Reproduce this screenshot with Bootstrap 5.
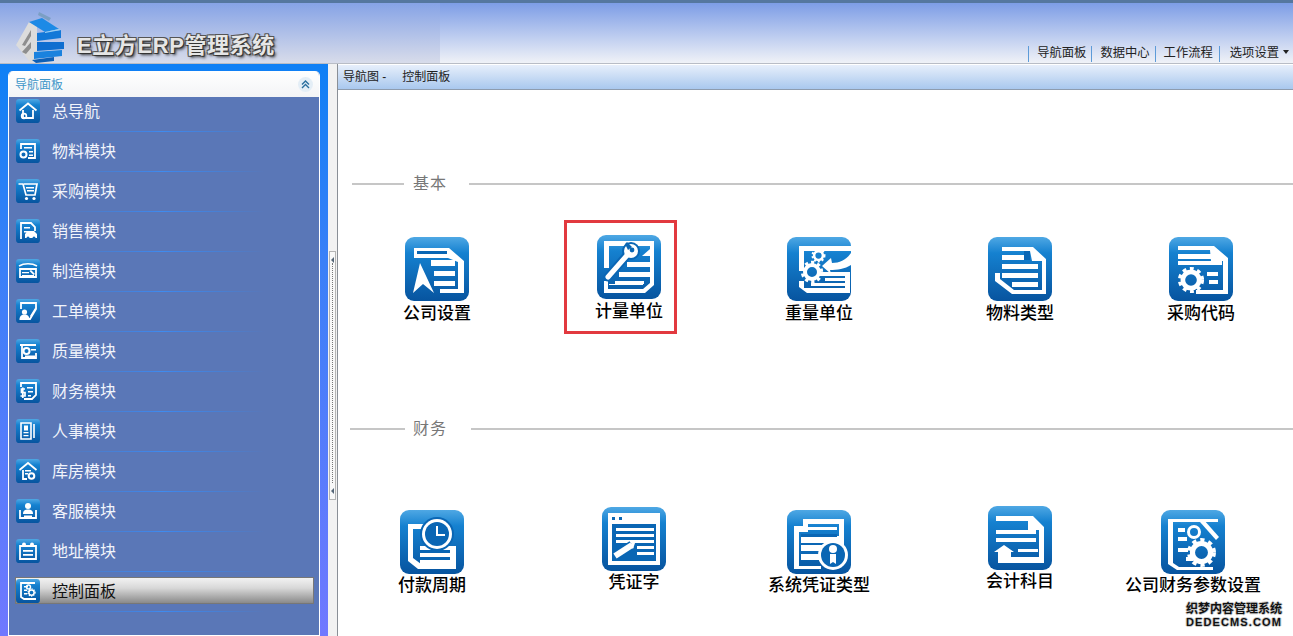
<!DOCTYPE html>
<html lang="zh-CN">
<head>
  <meta charset="UTF-8">
  <meta name="viewport" content="width=device-width, initial-scale=1.0">
  <title>E立方ERP管理系统</title>
  <link href="https://cdn.jsdelivr.net/npm/bootstrap@5.3.0/dist/css/bootstrap.min.css" rel="stylesheet">
  <style>
    html, body { height: 100%; overflow: hidden; }
    body {
      font-family: "Liberation Sans", "Noto Sans CJK SC", sans-serif;
      background: #fff;
      color: #000;
    }
    /* header */
    .top-bar {
      height: 64px;
      border-top: 3px solid #55779f;
      border-bottom: 1px solid #b9bdc6;
      background: linear-gradient(#7d9de6, #f0f2f7);
    }
    .top-left {
      width: 440px;
      background: linear-gradient(#86a3e6, #d8dcea);
    }
    .logo-mark { width: 54px; height: 54px; margin: 6px 0 0 14px; flex: none; }
    .logo-name {
      margin: 29px 0 0 9px;
      font-size: 22px;
      line-height: 28px;
      font-weight: 700;
      letter-spacing: .6px;
      color: #e6e6e6;
      white-space: nowrap;
      text-shadow: 1px 1px 0 #333, -1px -1px 0 #555, 1px -1px 0 #555, -1px 1px 0 #555, 2px 2px 3px #333;
    }
    .top-links { margin-bottom: 1px; }
    .top-links .nav-link {
      padding: 0 0 0 8px;
      height: 16px;
      line-height: 15px;
      font-size: 12.3px;
      color: #222;
      border-left: 1px solid #5d9bd8;
    }
    .top-links .nav-item + .nav-item { margin-left: 5px; }
    .top-links .nav-item:last-child { margin-left: 6px; margin-right: 4px; }
    .top-links .nav-item:last-child .nav-link { padding-left: 10px; }
    .top-links .dropdown-toggle::after { margin-left: 4px; border-top-width: 4px; border-left-width: 3px; border-right-width: 3px; }
    /* left side */
    .page-body { height: 572px; }
    .side-wrap {
      width: 328px;
      flex: none;
      padding: 7px 8px 0;
      background: linear-gradient(#0f80f5, #3a80f8 35%, #7078ff);
    }
    .side-panel {
      width: 312px;
      height: 100%;
      border: 1px solid #fff;
      border-top: 0;
      border-radius: 5px 5px 0 0;
      background: #5a77b7;
      overflow: hidden;
    }
    .side-head {
      height: 26px;
      padding: 1px 6px 0 6px;
      font-size: 12px;
      color: #3f97c9;
      background: linear-gradient(#fff, #f3f4f6);
    }
    .side-fold {
      width: 15px;
      height: 15px;
      border-radius: 50%;
      background: #e4eef6;
    }
    .side-menu { margin: -5px 0 0; padding: 0; list-style: none; }
    .side-item { height: 40px; padding-top: 5px; position: relative; }
    .side-item::after {
      content: "";
      position: absolute;
      left: 51px;
      bottom: 0;
      width: 205px;
      height: 1px;
      background: linear-gradient(90deg, #5a77b7, #4a7ed0 20%, #3f86ea 45%, #3f8cf0 50%, #3f86ea 55%, #4a7ed0 80%, #5a77b7);
    }
    .side-link {
      height: 27px;
      margin: 0 5px 0 6px;
      padding-left: 0;
      gap: 12px;
      font-size: 16px;
      color: #f1f4fb;
      text-decoration: none;
      border: 1px solid transparent;
    }
    .side-link > svg { width: 24px; height: 24px; flex: none; }
    .side-link span { padding-top: 2px; }
    .side-link.is-on {
      color: #111;
      border-color: #777;
      background: linear-gradient(#f2f2f2, #d8d8d8 40%, #8a8a8a);
    }
    /* splitter */
    .split-bar { width: 9px; flex: none; background: #f2f2f2; padding: 187px 0 0 1px; }
    .split-grip {
      width: 7px;
      height: 249px;
      border: 1px solid #b4b4b4;
      background: #f8f8f8;
    }
    .split-dots { border-left: 1px dotted #777; margin-left: 2px; height: 220px; }
    .split-arrow { width: 0; height: 0; margin: 5px 0 0 1px; border: 3px solid transparent; border-right-color: #567; border-left: 0; }
    /* content */
    .main-area { border-left: 1px solid #8a8f96; min-width: 0; }
    .crumb-bar {
      height: 25px;
      margin-top: 1px;
      padding: 0 0 1px 5px;
      font-size: 12px;
      color: #222;
      border-bottom: 1px solid #8e9cae;
      background: linear-gradient(#e7effb, #a9c8ee);
    }
    .crumb-bar span:first-child { margin-right: 16px; }
    .group-head { height: 24px; color: #777; font-size: 16px; letter-spacing: 1px; }
    .group-head i { display: block; height: 2px; background: #c6c6c6; }
    .head-one { margin-top: 82px; }
    .head-one i:first-child { width: 52px; margin: 0 9px 0 14px; }
    .head-one i:last-child { flex: 1; margin-left: 22px; }
    .head-two { margin-top: 91px; }
    .head-two i:first-child { width: 55px; margin: 0 8px 0 12px; }
    .head-two i:last-child { flex: 1; margin-left: 24px; }
    .tile-row { align-items: flex-start; }
    .row-one { margin-top: 39px; }
    .row-two { margin-top: 65px; }
    .tile {
      width: 150px;
      flex: none;
      text-align: center;
      font-size: 17px;
      line-height: 24px;
      font-weight: 500;
      position: relative;
    }
    .tile > svg { display: block; width: 64px; height: 64px; margin: 0 auto; }
    .tile-text { display: block; margin-top: 1px; white-space: nowrap; }
    .row-two .tile-text { margin-top: 0; }
    .row-one .tile { margin-top: 2px; }
    .row-one .tile:nth-child(1) { margin-left: 24px; }
    .row-one .tile:nth-child(2) { margin-left: 42px; margin-top: 0; }
    .row-one .tile:nth-child(3) { margin-left: 40px; }
    .row-one .tile:nth-child(4) { margin-left: 51px; }
    .row-one .tile:nth-child(5) { margin-left: 31px; }
    .row-two .tile:nth-child(1) { margin-left: 19px; margin-top: 4px; }
    .row-two .tile:nth-child(2) { margin-left: 52px; margin-top: 1px; }
    .row-two .tile:nth-child(3) { margin-left: 35px; margin-top: 4px; }
    .row-two .tile:nth-child(4) { margin-left: 51px; }
    .row-two .tile:nth-child(5) { margin-left: 23px; margin-top: 4px; }
    .tile-mark::after {
      content: "";
      position: absolute;
      left: 10px;
      top: -15px;
      width: 113px;
      height: 114px;
      border: 3px solid #e2393f;
    }
    .site-mark {
      position: absolute;
      right: 11px;
      bottom: 7px;
      font-size: 12px;
      line-height: 13px;
      font-weight: 700;
      text-align: center;
      color: #111;
      text-shadow: 1px 0 0 #ccc, -1px 0 0 #ccc, 0 1px 0 #ccc, 0 -1px 0 #ccc;
    }
    .site-mark span { display: block; letter-spacing: 1.1px; font-size: 11px; }
    .ico-w { fill: #fff; }
    .ico-b { fill: #0a66b4; }
    .ico-s { fill: none; stroke: #fff; }
  </style>
</head>
<body>
  <!-- shared icon background -->
  <svg width="0" height="0" class="position-absolute">
    <defs>
      <linearGradient id="tileBg" x1="0" y1="0" x2="0" y2="1">
        <stop offset="0" stop-color="#4fa8e4"/>
        <stop offset=".25" stop-color="#1581d0"/>
        <stop offset="1" stop-color="#07549f"/>
      </linearGradient>
      <symbol id="bg" viewBox="0 0 64 64"><rect width="64" height="64" rx="9" fill="url(#tileBg)"/></symbol>
      <symbol id="gear" viewBox="0 0 24 24">
        <circle cx="12" cy="12" r="7" fill="none" stroke="#fff" stroke-width="4"/>
        <circle cx="12" cy="12" r="9.500" fill="none" stroke="#fff" stroke-width="3.400" stroke-dasharray="3.200 3.020"/>
      </symbol>
    </defs>
  </svg>

  <header class="top-bar d-flex justify-content-between">
    <div class="top-left d-flex">
      <svg class="logo-mark" viewBox="0 0 54 54">
        <path d="M25 3l12 6-2 3-11-6z" fill="#7b9fc4"/>
        <path d="M2 36L15 13l8 4v33l-6 4z" fill="#dcdcdc"/>
        <path d="M8 36l9-15v6l-6 10zM8 43l9-10v6l-5 6z" fill="#8e8e8e"/>
        <path d="M15 13l13-4 17 11-14 3z" fill="#1d8ae6"/>
        <path d="M23 24l24-3v8l-24 3z" fill="#1278d8"/>
        <path d="M31 23l14-3 2 1-16 3z" fill="#9ad0f4"/>
        <path d="M23 33l27 0v7l-27 2z" fill="#0f6ed0"/>
        <path d="M20 43l28-2v6l-28 3z" fill="#1a82de"/>
        <path d="M18 51l22-3v4l-18 2z" fill="#0d5fb6"/>
      </svg>
      <div class="logo-name">E立方ERP管理系统</div>
    </div>
    <ul class="nav top-links align-items-end">
      <li class="nav-item"><a class="nav-link" href="#">导航面板</a></li>
      <li class="nav-item"><a class="nav-link" href="#">数据中心</a></li>
      <li class="nav-item"><a class="nav-link" href="#">工作流程</a></li>
      <li class="nav-item"><a class="nav-link dropdown-toggle" href="#">选项设置</a></li>
    </ul>
  </header>

  <div class="page-body d-flex">
    <aside class="side-wrap">
      <div class="side-panel">
        <div class="side-head d-flex align-items-center justify-content-between">
          <span>导航面板</span>
          <span class="side-fold d-flex align-items-center justify-content-center">
            <svg width="9" height="9" viewBox="0 0 9 9" fill="none" stroke="#2a6f9e" stroke-width="1.4"><path d="M1 4.5L4.5 1 8 4.5M1 8L4.5 4.5 8 8"/></svg>
          </span>
        </div>
        <ul class="side-menu">
          <li class="side-item"><a class="side-link d-flex align-items-center" href="#">
            <svg viewBox="0 0 24 24"><use href="#bg"/><path class="ico-s" stroke-width="1.8" d="M3.5 11.5L12 4.5l8.500 7M7 11v8h10v-8"/><circle class="ico-s" stroke-width="1.600" cx="8" cy="17" r="2.400"/></svg>
            <span>总导航</span></a></li>
          <li class="side-item"><a class="side-link d-flex align-items-center" href="#">
            <svg viewBox="0 0 24 24"><use href="#bg"/><path class="ico-s" stroke-width="1.8" d="M5 10V5h14v14h-7"/><path class="ico-w" d="M8 8h8v1.500H8zM13 12h4v1.500h-4zM13 15.500h4V17h-4z"/><circle class="ico-s" stroke-width="2" cx="7.500" cy="15.500" r="3"/></svg>
            <span>物料模块</span></a></li>
          <li class="side-item"><a class="side-link d-flex align-items-center" href="#">
            <svg viewBox="0 0 24 24"><use href="#bg"/><path class="ico-s" stroke-width="1.700" d="M2.500 5H7l3 11h9l2-11H8"/><path class="ico-w" d="M10 8h8v1.400h-8zM11 11h7v1.400h-7z"/><circle class="ico-w" cx="10.500" cy="19.500" r="1.600"/><circle class="ico-w" cx="18" cy="19.500" r="1.600"/></svg>
            <span>采购模块</span></a></li>
          <li class="side-item"><a class="side-link d-flex align-items-center" href="#">
            <svg viewBox="0 0 24 24"><use href="#bg"/><path class="ico-s" stroke-width="1.800" d="M5 20V4h10l4 4v4"/><path class="ico-w" d="M8 8h6v1.500H8zM8 12h5v1.500H8zM9 15l3-3h6l3 3v4H9z"/><circle class="ico-b" cx="12" cy="19" r="1.500"/><circle class="ico-b" cx="18" cy="19" r="1.500"/></svg>
            <span>销售模块</span></a></li>
          <li class="side-item"><a class="side-link d-flex align-items-center" href="#">
            <svg viewBox="0 0 24 24"><use href="#bg"/><path class="ico-s" stroke-width="1.500" d="M3 7c5-3 13-3 18 0"/><path class="ico-s" stroke-width="1.800" d="M4 10h16v8H4z"/><path class="ico-w" d="M6 13h7v1.300H6zM6 16h12v1.300H6zM15 11l4 4-1.500 1-4-4z"/></svg>
            <span>制造模块</span></a></li>
          <li class="side-item"><a class="side-link d-flex align-items-center" href="#">
            <svg viewBox="0 0 24 24"><use href="#bg"/><path class="ico-s" stroke-width="1.800" d="M5 10V4h15v6l-6 10h-2"/><circle class="ico-w" cx="8.500" cy="13" r="2.600"/><path class="ico-w" d="M3.500 21c0-4 2-5.500 5-5.500s5 1.500 5 5.500zM14 17l5-8 1 1-5 8z"/></svg>
            <span>工单模块</span></a></li>
          <li class="side-item"><a class="side-link d-flex align-items-center" href="#">
            <svg viewBox="0 0 24 24"><use href="#bg"/><path class="ico-s" stroke-width="1.800" d="M4 6h16M6 6v13h14v-5"/><circle class="ico-s" stroke-width="2" cx="10.500" cy="12" r="3"/><path class="ico-w" d="M15 10h5v1.500h-5zM9 16.500h10V18H9z"/></svg>
            <span>质量模块</span></a></li>
          <li class="side-item"><a class="side-link d-flex align-items-center" href="#">
            <svg viewBox="0 0 24 24"><use href="#bg"/><path class="ico-s" stroke-width="1.800" d="M5 8V4h15v12l-4 4H8"/><path class="ico-w" d="M11 8h6v1.500h-6zM12 12h5v1.500h-5zM12 16h3v1.500h-3z"/><path class="ico-s" stroke-width="1.700" d="M9 10H5.500v3.500H9V17H4.500M6.800 8.500V19"/></svg>
            <span>财务模块</span></a></li>
          <li class="side-item"><a class="side-link d-flex align-items-center" href="#">
            <svg viewBox="0 0 24 24"><use href="#bg"/><path class="ico-s" stroke-width="1.600" d="M5 4h10v16H5zM18 5v14"/><path class="ico-w" d="M8 6.500h4v5H8zM7.500 13h5v1.300h-5zM7.500 16h5v1.300h-5z"/></svg>
            <span>人事模块</span></a></li>
          <li class="side-item"><a class="side-link d-flex align-items-center" href="#">
            <svg viewBox="0 0 24 24"><use href="#bg"/><path class="ico-s" stroke-width="1.800" d="M3.500 11L12 4l8.500 7M7 11v9h4"/><path class="ico-w" d="M9 11h6v1.400H9zM9 14h3v1.400H9z"/><circle class="ico-s" stroke-width="2" cx="15.500" cy="17" r="2.800"/></svg>
            <span>库房模块</span></a></li>
          <li class="side-item"><a class="side-link d-flex align-items-center" href="#">
            <svg viewBox="0 0 24 24"><use href="#bg"/><circle class="ico-w" cx="12" cy="7" r="3"/><path class="ico-w" d="M7 15c0-3.500 2-4.500 5-4.500s5 1 5 4.500z"/><path class="ico-s" stroke-width="1.800" d="M4 11v8h16v-8"/><path class="ico-w" d="M8 16.500h8V18H8z"/></svg>
            <span>客服模块</span></a></li>
          <li class="side-item"><a class="side-link d-flex align-items-center" href="#">
            <svg viewBox="0 0 24 24"><use href="#bg"/><circle class="ico-w" cx="8" cy="5.500" r="2"/><circle class="ico-w" cx="16" cy="5.500" r="2"/><path class="ico-s" stroke-width="1.800" d="M4 10V7h16v3M4 10v10h16V10"/><path class="ico-w" d="M7 11h10v1.800H7zM7 15h10v1.800H7z"/></svg>
            <span>地址模块</span></a></li>
          <li class="side-item"><a class="side-link is-on d-flex align-items-center" href="#">
            <svg viewBox="0 0 24 24"><use href="#bg"/><path class="ico-s" stroke-width="1.800" d="M19 4H5v14l3 2h12"/><path class="ico-w" d="M8 7h4v1.400H8zM8 10.500h3v1.400H8zM8 14h3v1.400H8z"/><circle class="ico-s" stroke-width="1.400" cx="12.500" cy="8" r="2"/><svg x="11" y="9" width="9" height="9" viewBox="0 0 24 24"><use href="#gear"/></svg></svg>
            <span>控制面板</span></a></li>
        </ul>
      </div>
    </aside>

    <div class="split-bar">
      <div class="split-grip">
        <div class="split-arrow"></div>
        <div class="split-dots"></div>
        <div class="split-arrow"></div>
      </div>
    </div>

    <main class="main-area flex-grow-1 position-relative">
      <div class="crumb-bar d-flex align-items-center">
        <span>导航图 -</span><span>控制面板</span>
      </div>

      <div class="group-head head-one d-flex align-items-center"><i></i><span>基本</span><i></i></div>
      <div class="tile-row row-one d-flex">
        <a class="tile text-decoration-none text-black">
          <svg viewBox="0 0 64 64"><use href="#bg"/>
            <path class="ico-w" d="M9 11h35l15 13v32H35v-4h18V25l-10-4H9z"/>
            <path class="ico-b" d="M12 14h30v3H12z"/>
            <path class="ico-w" d="M26 23h24v6H26zM29 34h21v5H29zM29 44h21v5H29z"/>
            <path class="ico-w" d="M15 26l14 30-11-9-10 9z"/>
          </svg>
          <span class="tile-text">公司设置</span>
        </a>
        <a class="tile tile-mark text-decoration-none text-black">
          <svg viewBox="0 0 64 64"><use href="#bg"/>
            <path class="ico-w" d="M7 6h50v44l-9 8H7V46h4v8h35l7-6V11H12v22H7z"/>
            <path class="ico-w" d="M45 21l8-7v7zM30 27h23v5H30zM22 37h31v5H22zM18 46h29v3H18z"/>
            <path d="M11 42l21-24" stroke="#0a66b4" stroke-width="9" stroke-linecap="round"/>
            <circle class="ico-b" cx="34" cy="16" r="9"/>
            <path d="M11 42l21-24" stroke="#fff" stroke-width="5" stroke-linecap="round"/>
            <circle class="ico-w" cx="34" cy="16" r="7"/><circle class="ico-b" cx="35" cy="15" r="2.400"/>
            <path class="ico-b" d="M30 7l5 5-4 3-3-6z"/>
            <path class="ico-w" d="M12 49h34v1H12z"/>
          </svg>
          <span class="tile-text">计量单位</span>
        </a>
        <a class="tile text-decoration-none text-black">
          <svg viewBox="0 0 64 64"><use href="#bg"/>
            <path class="ico-w" d="M12 9h52v5H17v20h-5zM12 44h5v7h41V39H30v-4h33v21H20l-8-6z"/>
            <svg x="13" y="23" width="24" height="24" viewBox="0 0 24 24"><use href="#gear"/></svg>
            <svg x="24" y="11" width="15" height="15" viewBox="0 0 24 24"><use href="#gear"/></svg>
            <path class="ico-w" d="M64 16v12c-6 4-14 5-21 5l1 4-9-8 9-8 1 5c8 0 14-3 19-10z"/>
            <path class="ico-w" d="M38 41h20v3H38zM24 46h34v3H24z"/>
          </svg>
          <span class="tile-text">重量单位</span>
        </a>
        <a class="tile text-decoration-none text-black">
          <svg viewBox="0 0 64 64"><use href="#bg"/>
            <path class="ico-w" d="M14 10h31l13 12v35H24L7 44V36h5v6l14 11h28V24H44l-2-10H14z"/>
            <path class="ico-w" d="M14 18h22v5H14zM14 27h36v5H14zM14 36h36v5H14z"/>
            <path class="ico-w" d="M24 45h26v5H24z"/>
            <path class="ico-b" d="M36 14h6v9h-6zM19 41h4v4h-4z"/>
          </svg>
          <span class="tile-text">物料类型</span>
        </a>
        <a class="tile text-decoration-none text-black">
          <svg viewBox="0 0 64 64"><use href="#bg"/>
            <path class="ico-w" d="M9 9h36l14 12v36H27v-4h27V24H42l-1-11H9z"/>
            <path class="ico-w" d="M9 17h33v5H9zM9 24h44v4H9z"/>
            <svg x="8" y="29" width="28" height="28" viewBox="0 0 24 24"><use href="#gear"/></svg>
            <path class="ico-w" d="M38 35h11v4H38zM40 43h9v4H40z"/>
          </svg>
          <span class="tile-text">采购代码</span>
        </a>
      </div>

      <div class="group-head head-two d-flex align-items-center"><i></i><span>财务</span><i></i></div>
      <div class="tile-row row-two d-flex">
        <a class="tile text-decoration-none text-black">
          <svg viewBox="0 0 64 64"><use href="#bg"/>
            <path class="ico-w" d="M8 14h16v5H13v29l8 6h31V42h4v17H18L8 51z"/>
            <path class="ico-w" d="M20 36h36v6H20zM20 42h32v12H20z"/>
            <path class="ico-b" d="M20 40h30v3H20zM20 47h30v3H20z"/>
            <circle class="ico-b" cx="37" cy="24" r="17"/>
            <circle class="ico-w" cx="37" cy="24" r="15"/><circle class="ico-b" cx="37" cy="24" r="12"/>
            <path d="M37 16v9h8" fill="none" stroke="#fff" stroke-width="2"/>
          </svg>
          <span class="tile-text">付款周期</span>
        </a>
        <a class="tile text-decoration-none text-black">
          <svg viewBox="0 0 64 64"><use href="#bg"/>
            <path class="ico-w" d="M6 6h52v52H6z"/>
            <path class="ico-b" d="M10 17h44v37H10zM10 10h3v3h-3zM17 10h3v3h-3z"/>
            <path class="ico-w" d="M14 21h38v3H14zM14 27h38v3H14zM14 33h38v3H14zM35 39h17v3H35zM35 45h17v3H35z"/>
            <path d="M13 49l17-11" stroke="#0a66b4" stroke-width="9"/>
            <path d="M13 49l17-11" stroke="#fff" stroke-width="6"/>
            <path class="ico-w" d="M31 34l3-1-3 9-3-4z"/>
          </svg>
          <span class="tile-text">凭证字</span>
        </a>
        <a class="tile text-decoration-none text-black">
          <svg viewBox="0 0 64 64"><use href="#bg"/>
            <path class="ico-w" d="M7 16h9V9h41v27h-5V14H21v8H12v34h22v3H7z"/>
            <path class="ico-w" d="M21 17h29v3H21zM14 26h39v7H14zM14 35h28v6H14zM14 44h24v6H14z"/>
            <path class="ico-b" d="M14 24h36v3H14zM14 33h36v2H14z"/>
            <circle class="ico-w" cx="46" cy="45" r="15"/><circle class="ico-b" cx="46" cy="45" r="12"/>
            <circle class="ico-w" cx="46" cy="39" r="4"/><path class="ico-w" d="M43 44h6v10l-3-2-3 2z"/>
          </svg>
          <span class="tile-text">系统凭证类型</span>
        </a>
        <a class="tile text-decoration-none text-black">
          <svg viewBox="0 0 64 64"><use href="#bg"/>
            <path class="ico-w" d="M8 10h37l11 11v36H22V51h29V24H40V15H8z"/>
            <path class="ico-w" d="M12 12h30v2H12zM8 24h40v4H8zM8 32h40v4H8zM30 43h20v3H30z"/>
            <path class="ico-w" d="M6 46l10-7 10 7h-3v11H10V46z"/>
          </svg>
          <span class="tile-text">会计科目</span>
        </a>
        <a class="tile text-decoration-none text-black">
          <svg viewBox="0 0 64 64"><use href="#bg"/>
            <path class="ico-w" d="M7 9h50v3H12v41l6 4h34v3H16l-9-6z"/>
            <path class="ico-w" d="M17 18h7v4h-7zM17 27h9v4h-9zM17 38h10v4h-10zM25 47h7v4h-7z"/>
            <svg x="25" y="27" width="31" height="31" viewBox="0 0 24 24"><use href="#gear"/></svg>
            <circle class="ico-s" stroke-width="3" cx="33" cy="22" r="5.500"/>
            <path class="ico-w" d="M39 12l4-2 15 17-3 3z"/>
          </svg>
          <span class="tile-text">公司财务参数设置</span>
        </a>
      </div>

      <div class="site-mark">织梦内容管理系统<span>DEDECMS.COM</span></div>
    </main>
  </div>

  <script src="https://cdn.jsdelivr.net/npm/bootstrap@5.3.0/dist/js/bootstrap.bundle.min.js"></script>
</body>
</html>
